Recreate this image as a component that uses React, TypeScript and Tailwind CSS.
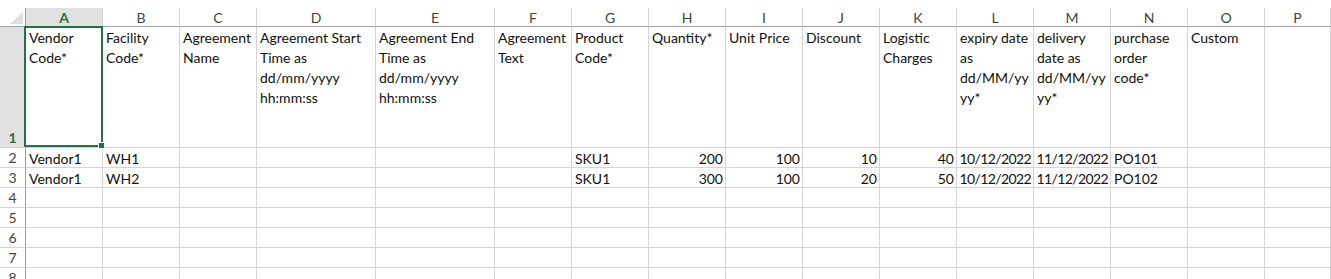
const font = { fontFamily: "Lato, 'Open Sans', sans-serif" };

type Col = { key: string; w: string; head: string[] };

const cols: Col[] = [
  { key: "A", w: "w-[77px]", head: ["Vendor", "Code*"] },
  { key: "B", w: "w-[77px]", head: ["Facility", "Code*"] },
  { key: "C", w: "w-[77px]", head: ["Agreement", "Name"] },
  { key: "D", w: "w-[119px]", head: ["Agreement Start", "Time as", "dd/mm/yyyy", "hh:mm:ss"] },
  { key: "E", w: "w-[119px]", head: ["Agreement End", "Time as", "dd/mm/yyyy", "hh:mm:ss"] },
  { key: "F", w: "w-[77px]", head: ["Agreement", "Text"] },
  { key: "G", w: "w-[77px]", head: ["Product", "Code*"] },
  { key: "H", w: "w-[77px]", head: ["Quantity*"] },
  { key: "I", w: "w-[77px]", head: ["Unit Price"] },
  { key: "J", w: "w-[77px]", head: ["Discount"] },
  { key: "K", w: "w-[77px]", head: ["Logistic", "Charges"] },
  { key: "L", w: "w-[77px]", head: ["expiry date", "as", "dd/MM/yy", "yy*"] },
  { key: "M", w: "w-[77px]", head: ["delivery", "date as", "dd/MM/yy", "yy*"] },
  { key: "N", w: "w-[77px]", head: ["purchase", "order", "code*"] },
  { key: "O", w: "w-[77px]", head: ["Custom"] },
  { key: "P", w: "w-[66px]", head: [] },
];

// values per row, numbers and dates sit on the right
const data: (string | number)[][] = [
  ["Vendor1", "WH1", "", "", "", "", "SKU1", 200, 100, 10, 40, "10/12/2022", "11/12/2022", "PO101", "", ""],
  ["Vendor1", "WH2", "", "", "", "", "SKU1", 300, 100, 20, 50, "10/12/2022", "11/12/2022", "PO102", "", ""],
];

const isDate = (v: string | number) => /^\d+\/\d+\/\d+$/.test(String(v));
const isRight = (v: string | number) => typeof v === "number" || isDate(v);

const RowHead = ({ n, tall, selected }: { n: number; tall?: boolean; selected?: boolean }) => (
  <div
    className={`w-[26px] shrink-0 flex items-end justify-center border-r border-b border-r-[#9e9e9e] border-b-[#d4d4d4] text-[14px] leading-[18px] ${
      tall ? "h-[121px]" : "h-[20px]"
    } ${selected ? "bg-[#e1e1e1] text-[#217346] font-bold" : "text-[#444]"}`}
  >
    {n}
  </div>
);

export default function App() {
  return (
    <div className="w-[1331px] h-[279px] overflow-hidden bg-white text-[#111]" style={font}>
      <div className="h-[8px]" />

      {/* column letters */}
      <div className="flex h-[19px]">
        <div className="w-[26px] shrink-0 border-r border-b border-[#9e9e9e] relative">
          <svg className="absolute right-[2px] bottom-[2px]" width="13" height="12" viewBox="0 0 13 12">
            <polygon points="13,0 13,12 0,12" fill="#dfdfdf" />
          </svg>
        </div>
        {cols.map((c) => (
          <div
            key={c.key}
            className={`${c.w} shrink-0 flex items-center justify-center border-r border-b border-r-[#d4d4d4] border-b-[#9e9e9e] text-[14px] ${
              c.key === "A" ? "bg-[#e1e1e1] text-[#217346] font-bold" : "text-[#444]"
            }`}
          >
            {c.key}
          </div>
        ))}
      </div>

      {/* header row 1 */}
      <div className="flex">
        <RowHead n={1} tall selected />
        {cols.map((c) => (
          <div
            key={c.key}
            className={`${c.w} shrink-0 h-[121px] border-r border-b border-[#d4d4d4] pl-[3px] pt-[1px] text-[14px] leading-[20px] relative`}
          >
            {c.head.map((l) => (
              <div key={l} className="whitespace-nowrap">
                {l}
              </div>
            ))}
            {c.key === "A" && (
              <div className="absolute left-[-2px] top-[-1px] right-[-1px] bottom-0 border-2 border-[#217346] z-10">
                <div className="absolute right-[-4px] bottom-[-4px] w-[7px] h-[7px] bg-[#217346] border border-white" />
              </div>
            )}
          </div>
        ))}
      </div>

      {/* data rows */}
      {data.map((row, i) => (
        <div key={i} className="flex">
          <RowHead n={i + 2} />
          {cols.map((c, j) => (
            <div
              key={c.key}
              className={`${c.w} shrink-0 h-[20px] border-r border-b border-[#d4d4d4] flex items-end text-[14px] leading-[17px] whitespace-nowrap ${
                isRight(row[j]) ? "justify-end pr-[2px]" : "justify-start pl-[3px]"
              } ${isDate(row[j]) ? "tracking-[-0.6px]" : ""}`}
            >
              {row[j]}
            </div>
          ))}
        </div>
      ))}

      {[4, 5, 6, 7, 8].map((n) => (
        <div key={n} className="flex">
          <RowHead n={n} />
          {cols.map((c) => (
            <div key={c.key} className={`${c.w} shrink-0 h-[20px] border-r border-b border-[#d4d4d4]`} />
          ))}
        </div>
      ))}
    </div>
  );
}
